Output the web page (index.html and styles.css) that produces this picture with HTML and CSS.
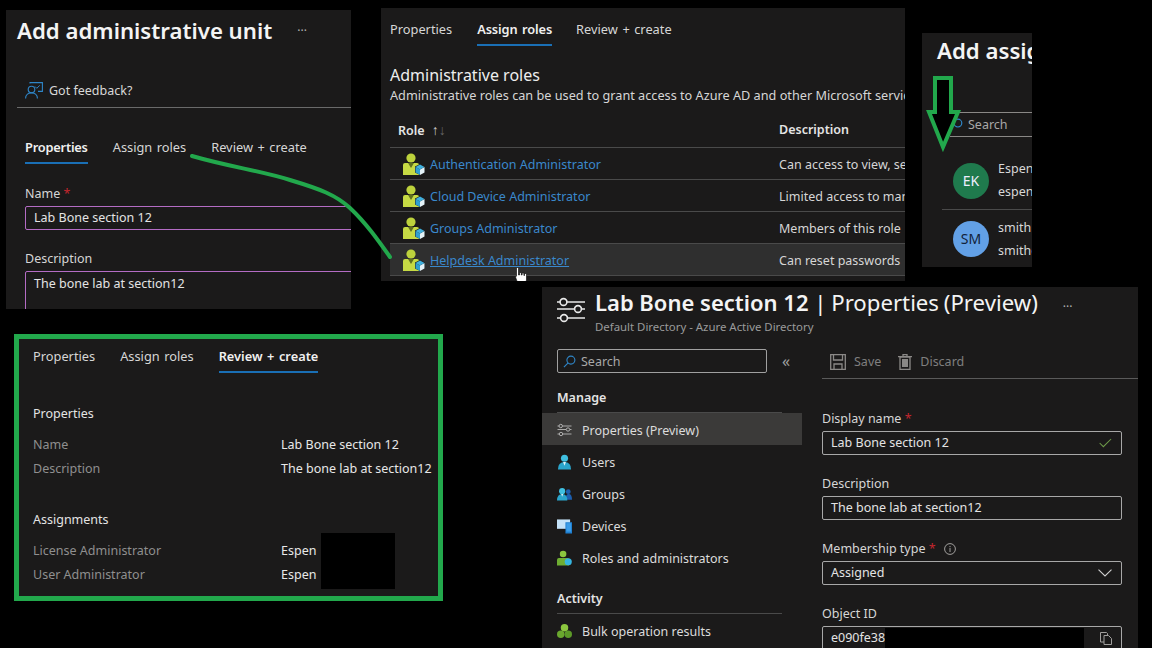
FILE: index.html
```html
<!doctype html>
<html lang="en">
<head>
  <meta charset="UTF-8">
  <title>Administrative unit walkthrough</title>
  <link rel="stylesheet" href="styles.css">
</head>
<body>
  <svg class="defs" width="0" height="0">
    <symbol id="i-sliders" viewBox="0 0 30 26">
      <g fill="none" stroke="currentColor" stroke-width="1.6">
        <path d="M1 5h3M11 5h18M1 12h17M26 12h3M1 21h3M12 21h17"/>
        <circle cx="7.5" cy="5" r="3.4"/><circle cx="22" cy="12" r="3.4"/><circle cx="8" cy="21" r="3.4"/>
      </g>
    </symbol>
    <symbol id="i-role" viewBox="0 0 22 22">
      <circle cx="8" cy="5" r="4.6" fill="#bdd23c"/>
      <path d="M0 22V12q0-2 2-2h12q2 0 2 2v10z" fill="#c6da44"/>
      <path d="M5 10h6l-3 5z" fill="#5f6e1e"/>
      <path d="M17 11l5 2.500v6L17 22l-5-2.500v-6z" fill="#1b1a1a"/>
      <path d="M12.500 14l4.500 2.500V22l-4.500-2.500z" fill="#2f9fd0"/>
      <path d="M21.500 14L17 16.500V22l4.500-2.500z" fill="#e4f2f8"/>
      <path d="M17 11.500l4.500 2.500-4.500 2.500-4.500-2.500z" fill="#3fb0de"/>
    </symbol>
    <symbol id="i-user" viewBox="0 0 16 16">
      <circle cx="8" cy="4" r="3.800" fill="#3fbfe0"/>
      <path d="M1 16q0-8 7-8t7 8z" fill="#2aa5cc"/>
      <path d="M6.500 8h3L8 12z" fill="#dff5fb"/>
    </symbol>
    <symbol id="i-group" viewBox="0 0 16 16">
      <circle cx="12" cy="5.500" r="2.600" fill="#1c5fb0"/>
      <path d="M9 14q0-6 3.500-6T16 14z" fill="#1c5fb0"/>
      <circle cx="5.500" cy="5" r="3.300" fill="#3fbfe0"/>
      <path d="M0 15q0-7 5.500-7T11 15z" fill="#2aa5cc"/>
      <path d="M4.500 8h2L5.500 11z" fill="#dff5fb"/>
    </symbol>
    <symbol id="i-device" viewBox="0 0 16 16">
      <path d="M0 1h14v10H0z" fill="#c4e2f8"/>
      <path d="M9 4h7v12H9z" fill="#1f7fd0"/>
      <path d="M10 5h5v9h-5z" fill="#3a9ce8"/>
    </symbol>
    <symbol id="i-bulk" viewBox="0 0 16 16">
      <circle cx="8" cy="4.500" r="4" fill="#8cc63f"/>
      <circle cx="4" cy="11.500" r="4" fill="#6aa82e"/>
      <circle cx="12" cy="11.500" r="4" fill="#5c9a28"/>
    </symbol>
    <symbol id="i-role-small" viewBox="0 0 16 16">
      <circle cx="6.500" cy="3.800" r="3.500" fill="#8cc63f"/>
      <path d="M0 16V10q0-2 2-2h9q2 0 2 2v6z" fill="#6fae32"/>
      <circle cx="12" cy="12" r="3.800" fill="#35b5e0"/>
    </symbol>
  </svg>

  <section class="window add-unit">
    <div class="title-row">
      <h1 class="title">Add administrative unit</h1>
      <span class="more">···</span>
    </div>
    <div class="feedback">
      <svg class="feedback-icon" viewBox="0 0 18 17" width="18" height="17">
        <g fill="none" stroke="#2f86c8" stroke-width="1.100">
          <path d="M5 1.500V.6h12.400v8.800H13"/>
          <circle cx="6.500" cy="7.500" r="3.300"/>
          <path d="M.6 16.500c0-7.500 11.800-7.500 11.800 0"/>
        </g>
        <path d="M10 4.500l1.800 1.800 3-3" fill="none" stroke="#2f86c8"/>
      </svg>
      Got feedback?
    </div>
    <div class="form-wrap">
      <nav class="tabs">
        <span class="tab on">Properties</span>
        <span class="tab">Assign roles</span>
        <span class="tab">Review + create</span>
      </nav>
      <div class="field-label">Name <b class="req">*</b></div>
      <div class="field pink">Lab Bone section 12</div>
      <div class="field-label">Description</div>
      <div class="field pink tall">The bone lab at section12</div>
    </div>
  </section>

  <section class="window assign-roles">
    <nav class="tabs">
      <span class="tab">Properties</span>
      <span class="tab on">Assign roles</span>
      <span class="tab">Review + create</span>
    </nav>
    <h2 class="roles-head">Administrative roles</h2>
    <p class="roles-desc">Administrative roles can be used to grant access to Azure AD and other Microsoft servic</p>
    <div class="role-table">
      <div class="role-row head">
        <span class="role-sort">Role <i class="sort">↑<em>↓</em></i></span>
        <span>Description</span>
      </div>
      <div class="role-row">
        <a class="role-link"><svg class="role-icon"><use href="#i-role"/></svg>Authentication Administrator</a>
        <span class="role-text">Can access to view, se</span>
      </div>
      <div class="role-row">
        <a class="role-link"><svg class="role-icon"><use href="#i-role"/></svg>Cloud Device Administrator</a>
        <span class="role-text">Limited access to man</span>
      </div>
      <div class="role-row">
        <a class="role-link"><svg class="role-icon"><use href="#i-role"/></svg>Groups Administrator</a>
        <span class="role-text">Members of this role</span>
      </div>
      <div class="role-row hover">
        <a class="role-link"><svg class="role-icon"><use href="#i-role"/></svg><u>Helpdesk Administrator</u></a>
        <span class="role-text">Can reset passwords</span>
        <svg class="hand" viewBox="0 0 12 17" width="12" height="17">
          <path d="M1.500 1.500a1 1 0 0 1 2 0V8h1V6a1 1 0 0 1 1.800 0v2h.8V6.500a1 1 0 0 1 1.800 0V8.500h.6V7.500a1 1 0 0 1 2 0V13l-1 4H3L.5 10l1-1z" fill="#fff" stroke="#000" stroke-width=".6"/>
        </svg>
      </div>
    </div>
  </section>

  <section class="window add-assign">
    <h1 class="title">Add assig</h1>
    <div class="assign-search">
      <svg viewBox="0 0 14 14" width="13" height="13"><circle cx="8.500" cy="5.500" r="4.200" fill="none" stroke="#2f86c8" stroke-width="1.300"/></svg>
      Search
    </div>
    <div class="person">
      <span class="avatar green">EK</span>
      <div class="person-text">Espen<br>espen</div>
    </div>
    <div class="person">
      <span class="avatar blue">SM</span>
      <div class="person-text">smith<br>smithc</div>
    </div>
  </section>

  <section class="window review">
    <nav class="tabs">
      <span class="tab">Properties</span>
      <span class="tab">Assign roles</span>
      <span class="tab on">Review + create</span>
    </nav>
    <div class="review-head">Properties</div>
    <dl class="review-list">
      <dt>Name</dt><dd>Lab Bone section 12</dd>
      <dt>Description</dt><dd>The bone lab at section12</dd>
    </dl>
    <div class="review-head second">Assignments</div>
    <dl class="review-list">
      <dt>License Administrator</dt><dd>Espen</dd>
      <dt>User Administrator</dt><dd>Espen</dd>
    </dl>
    <div class="redact-names"></div>
  </section>

  <section class="window unit-props">
    <header class="props-head">
      <svg class="props-icon"><use href="#i-sliders"/></svg>
      <div class="props-titles">
        <h1 class="title"><b>Lab Bone section 12</b> <span class="title-light">| Properties (Preview)</span><span class="more">···</span></h1>
        <div class="props-sub">Default Directory - Azure Active Directory</div>
      </div>
    </header>
    <div class="props-body">
      <aside class="side">
        <div class="side-top">
          <div class="side-search">
            <svg viewBox="0 0 14 14" width="13" height="13"><g fill="none" stroke="#2f86c8" stroke-width="1.200"><circle cx="8.500" cy="5.500" r="4.300"/><path d="M5.500 8.500L1 13"/></g></svg>
            Search
          </div>
          <span class="collapse">«</span>
        </div>
        <div class="side-head">Manage</div>
        <div class="side-item on"><svg class="side-icon sliders"><use href="#i-sliders"/></svg>Properties (Preview)</div>
        <div class="side-item"><svg class="side-icon"><use href="#i-user"/></svg>Users</div>
        <div class="side-item"><svg class="side-icon"><use href="#i-group"/></svg>Groups</div>
        <div class="side-item"><svg class="side-icon"><use href="#i-device"/></svg>Devices</div>
        <div class="side-item"><svg class="side-icon"><use href="#i-role-small"/></svg>Roles and administrators</div>
        <div class="side-head second">Activity</div>
        <div class="side-item"><svg class="side-icon"><use href="#i-bulk"/></svg>Bulk operation results</div>
      </aside>
      <div class="props-main">
        <div class="toolbar">
          <svg viewBox="0 0 16 16" width="16" height="16"><g fill="none" stroke="#8a8886" stroke-width="1.300"><path d="M.7.7h14.600v14.600H.7z"/><path d="M3.500.7v5.300h9V.7M4 15.300V10h8v5.300"/></g></svg>
          <span class="tool-label">Save</span>
          <svg class="tool-trash" viewBox="0 0 14 16" width="14" height="16"><g fill="none" stroke="#8a8886" stroke-width="1.300"><path d="M2 3h10v12.300H2zM0 2.600h14M5 2.600V.7h4v1.900"/></g><path d="M4 5h6v8H4z" fill="#8a8886"/></svg>
          <span class="tool-label">Discard</span>
        </div>
        <div class="props-form">
          <div class="field-label">Display name <b class="req">*</b></div>
          <div class="field grey with-end">Lab Bone section 12
            <svg viewBox="0 0 14 10" width="13" height="10"><path d="M.7 5l4 4L13 .7" fill="none" stroke="#6f9c4a" stroke-width="1.100"/></svg>
          </div>
          <div class="field-label">Description</div>
          <div class="field grey">The bone lab at section12</div>
          <div class="field-label">Membership type <b class="req">*</b>
            <svg class="info" viewBox="0 0 12 12" width="12" height="12"><circle cx="6" cy="6" r="5.400" fill="none" stroke="#a19f9d"/><path d="M6 5v4M6 3v1.200" stroke="#a19f9d"/></svg>
          </div>
          <div class="field grey with-end">Assigned
            <svg viewBox="0 0 14 8" width="14" height="8"><path d="M.5.700L7 7l6.500-6.300" fill="none" stroke="#d0d0d0" stroke-width="1.100"/></svg>
          </div>
          <div class="field-label">Object ID</div>
          <div class="field grey with-end object-id">e090fe38<span class="redact-id"></span>
            <svg viewBox="0 0 12 13" width="12" height="13"><g fill="#1b1a1a" stroke="#a19f9d"><path d="M.5.500h6l1 1v8.500h-7z"/><path d="M4 3.500h4.500l3 3v6H4z"/></g></svg>
          </div>
        </div>
      </div>
    </div>
  </section>

  <svg class="marks" viewBox="0 0 1152 648" width="1152" height="648">
    <path d="M192 156C230 167 262 171 290 180C320 189 336 195 350 208C366 223 378 240 390 257" fill="none" stroke="#22a84c" stroke-width="4" stroke-linecap="round"/>
    <path d="M935 78h16v34l7 0-15 35-14-35h6z" fill="#000" stroke="#22a84c" stroke-width="4"/>
  </svg>
</body>
</html>
```
FILE: styles.css
```css
*{
  box-sizing: border-box;
}
html, body{
  margin: 0;
  width: 1152px;
  height: 648px;
  overflow: hidden;
  background: #000;
}
body{
  position: relative;
  font-family: "Noto Sans", "Open Sans", sans-serif;
  font-size: 12.5px;
  color: #e8e8e8;
}
.defs{
  position: absolute;
}
h1, h2, p, dl, dd{
  margin: 0;
}

/* the collage: each screenshot is a free window on the black page */
.window{
  position: absolute;
  overflow: hidden;
  background: #1b1a1a;
}
.add-unit{
  left: 6px;
  top: 10px;
  width: 345px;
  height: 299px;
  padding-left: 11px;
}
.assign-roles{
  left: 381px;
  top: 8px;
  width: 524px;
  height: 273px;
  padding: 11px 0 0 9px;
}
.add-assign{
  left: 922px;
  top: 33px;
  width: 110px;
  height: 234px;
  padding-left: 15px;
}
.review{
  left: 14px;
  top: 334px;
  width: 429px;
  height: 267px;
  border: 5px solid #22a84c;
  padding: 7px 0 0 14px;
}
.unit-props{
  left: 542px;
  top: 287px;
  width: 596px;
  height: 361px;
}
.marks{
  position: absolute;
  left: 0;
  top: 0;
  pointer-events: none;
}

/* shared */
.title{
  font-size: 22.2px;
  font-weight: 600;
  line-height: 42px;
  color: #f4f4f4;
  white-space: nowrap;
}
.title-row{
  display: flex;
  align-items: center;
  height: 42px;
}
.more{
  margin-left: 25px;
  font-size: 12px;
  font-weight: 400;
  line-height: 1;
  color: #b0b0b0;
}
.tabs{
  display: flex;
  gap: 25px;
  font-size: 12.8px;
  word-spacing: 1.2px;
  line-height: 20px;
}
.tab{
  padding-bottom: 5px;
  border-bottom: 2px solid transparent;
  color: #d6d6d6;
}
.tab.on{
  font-weight: 600;
  color: #f0f0f0;
  border-bottom-color: #1a6fb5;
}
.field-label{
  height: 18px;
  line-height: 18px;
  margin-bottom: 3px;
  color: #d6d6d6;
}
.req{
  color: #c4262e;
  font-weight: 400;
}
.field{
  height: 24px;
  line-height: 22px;
  margin-bottom: 20px;
  padding-left: 8px;
  border: 1px solid #8a8886;
  border-radius: 2px;
  color: #e4e4e4;
  white-space: nowrap;
}
.field.pink{
  width: 400px;
  border-color: #b46cc4;
}
.field.tall{
  height: 60px;
  padding-top: 1px;
}
.field.grey{
  width: 300px;
  border-color: #a8a8a8;
}
.with-end{
  display: flex;
  justify-content: space-between;
  align-items: center;
  padding-right: 9px;
}

/* add administrative unit */
.feedback{
  display: flex;
  align-items: center;
  gap: 6px;
  height: 34px;
  margin: 22px 0 29px;
  padding-left: 8px;
  border-bottom: 1px solid #6a6a6a;
  color: #d8d8d8;
}
.form-wrap{
  padding-left: 8px;
}
.form-wrap .tabs{
  margin-bottom: 21px;
}
.form-wrap .tab.on{
  letter-spacing: -.2px;
}

/* assign roles */
.assign-roles .tab.on{
  letter-spacing: -.1px;
  margin-right: -1px;
}
.roles-head{
  margin-top: 18px;
  font-size: 16px;
  font-weight: 400;
  line-height: 22px;
  color: #eee;
}
.roles-desc{
  font-size: 12.7px;
  line-height: 18px;
  white-space: nowrap;
  color: #d6d6d6;
}
.role-table{
  margin-top: 8px;
}
.role-row{
  position: relative;
  display: grid;
  grid-template-columns: 389px 1fr;
  align-items: center;
  height: 32px;
  padding-top: 1px;
  border-bottom: 1px solid #4a4a4a;
  white-space: nowrap;
}
.role-row.head{
  height: 36px;
  padding: 0 0 0 8px;
  grid-template-columns: 381px 1fr;
  font-weight: 600;
  color: #e4e4e4;
}
.role-row.hover{
  background: #2f2f2f;
}
.role-sort{
  margin-top: -1px;
}
.sort{
  margin-left: 4px;
  font-size: 14px;
  font-style: normal;
  font-weight: 400;
  color: #c8c8c8;
}
.sort em{
  font-style: normal;
  color: #666;
}
.role-link{
  display: flex;
  align-items: center;
  gap: 5px;
  padding-left: 13px;
  color: #3a88cc;
}
.role-icon{
  width: 22px;
  height: 22px;
}
.role-text{
  color: #d6d6d6;
}
.hand{
  position: absolute;
  left: 125px;
  top: 23px;
}

/* add assignments */
.add-assign .title{
  margin-top: -3px;
}
.assign-search{
  display: flex;
  align-items: center;
  gap: 5px;
  width: 120px;
  height: 25px;
  margin: 40px 0 15px 13px;
  border-top: 1px solid #8a8886;
  border-bottom: 1px solid #8a8886;
  color: #a8a8a8;
  white-space: nowrap;
}
.person{
  display: flex;
  align-items: center;
  gap: 9px;
  width: 120px;
  height: 58px;
  margin-left: 5px;
  padding-left: 11px;
  border-bottom: 1px solid #4a4a4a;
  white-space: nowrap;
}
.person:last-child{
  border-bottom: 0;
}
.person-text{
  margin-top: -1px;
  line-height: 23px;
  color: #d8d8d8;
}
.avatar{
  flex: none;
  width: 36px;
  height: 36px;
  border-radius: 50%;
  font-size: 14px;
  line-height: 36px;
  text-align: center;
}
.avatar.green{
  background: #1f7a4d;
  color: #eef;
}
.avatar.blue{
  background: #62a0e6;
  color: #12223a;
}

/* review + create */
.review-head{
  margin-top: 31px;
  line-height: 20px;
  color: #e4e4e4;
}
.review-head.second{
  margin-top: 29px;
}
.review-list{
  display: grid;
  grid-template-columns: 248px 1fr;
  grid-auto-rows: 24px;
  margin-top: 9px;
  line-height: 24px;
  white-space: nowrap;
}
.review-list dt{
  color: #8f8f8f;
}
.review-list dd{
  color: #e8e8e8;
}
.redact-names{
  position: absolute;
  left: 302px;
  top: 194px;
  width: 74px;
  height: 56px;
  background: #000;
}

/* properties blade */
.props-head{
  display: flex;
  height: 60px;
  padding-left: 14px;
}
.props-icon{
  width: 30px;
  height: 26px;
  margin: 10px 9px 0 0;
  color: #e8e8e8;
}
.props-titles .title{
  font-size: 22px;
  line-height: 30px;
}
.props-titles b{
  font-weight: 600;
}
.title-light{
  font-size: 22.2px;
  font-weight: 400;
  word-spacing: -1px;
}
.props-sub{
  font-size: 11.4px;
  line-height: 18px;
  color: #9a9a9a;
}
.props-body{
  display: flex;
  gap: 20px;
}
.side{
  flex: none;
  width: 260px;
}
.side-top{
  display: flex;
  align-items: center;
  margin: 2px 0 15px 15px;
}
.side-search{
  display: flex;
  align-items: center;
  gap: 5px;
  width: 210px;
  height: 24px;
  padding-left: 5px;
  border: 1px solid #a0a0a0;
  border-radius: 2px;
  color: #a8a8a8;
}
.collapse{
  margin-left: 15px;
  font-size: 16px;
  color: #a0a0a0;
}
.side-head{
  width: 225px;
  height: 25px;
  margin-left: 15px;
  line-height: 20px;
  font-weight: 600;
  border-bottom: 1px solid #4a4a4a;
  color: #e4e4e4;
}
.side-head.second{
  margin-top: 16px;
}
.side-item{
  display: flex;
  align-items: center;
  gap: 10px;
  height: 32px;
  padding: 2px 0 0 15px;
  color: #dcdcdc;
}
.side-item.on{
  background: #3b3a39;
}
.side-icon{
  width: 15px;
  height: 16px;
}
.side-icon.sliders{
  color: #c8c8c8;
}
.props-main{
  flex: 1;
}
.toolbar{
  display: flex;
  align-items: center;
  height: 32px;
  padding: 0 0 2px 8px;
  border-bottom: 1px solid #5a5a5a;
}
.tool-label{
  margin-left: 8px;
  color: #7f7f7f;
}
.tool-trash{
  margin-left: 17px;
}
.props-form{
  margin-top: 31px;
}
.info{
  margin-left: 5px;
  vertical-align: -2px;
}
.object-id{
  position: relative;
  margin-bottom: 0;
}
.redact-id{
  position: absolute;
  left: 62px;
  top: 1px;
  width: 199px;
  height: 22px;
  background: #000;
}
```
